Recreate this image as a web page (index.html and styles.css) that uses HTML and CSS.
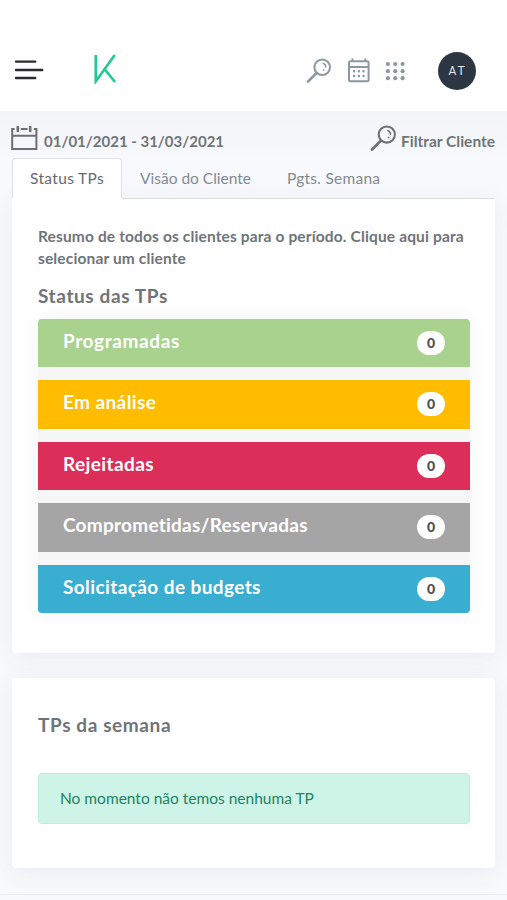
FILE: index.html
```html
<!DOCTYPE html>
<html lang="pt-BR">
<head>
    <meta charset="UTF-8">
    <meta name="viewport" content="width=device-width, initial-scale=1.0">
    <title>Status TPs</title>
    <link rel="stylesheet" href="styles.css">
</head>
<body>

    <!-- TOPO -->
    <header class="topbar">
        <svg class="menu" width="30" height="22" viewBox="0 0 30 22">
            <path d="M2 1.6H21.2M2 10H28.2M2 18H21.2"/>
        </svg>
        <svg class="logo" width="24" height="30" viewBox="0 0 24 30">
            <path d="M2.8 1V27.2L21.8 1M11.5 15L22 28"/>
        </svg>
        <nav class="icons">
            <svg class="icon" width="26" height="26" viewBox="0 0 26 26">
                <circle cx="16.2" cy="9.2" r="7.8"/>
                <path class="grosso" d="M10.5 15L2 23.6"/>
                <path class="fino" d="M16.7 5.2A4 4 0 0 1 19.7 9.6M18.4 11.6L17.2 12.5"/>
            </svg>
            <svg class="icon calendario" width="24" height="26" viewBox="0 0 24 26">
                <rect x="2" y="3.2" width="19.6" height="20" rx="1.5"/>
                <path d="M2 9H21.6M5.5 0.5V3.5M18.3 0.5V3.5"/>
                <path class="pontos" d="M7 13.3H7.1M11.8 13.3H11.9M16.5 13.3H16.6M7 18H7.1M11.8 18H11.9M16.5 18H16.6"/>
            </svg>
            <svg class="icon grade" width="20" height="20" viewBox="0 0 20 20">
                <circle cx="2.9" cy="3" r="2.1"/><circle cx="10.2" cy="3" r="2.1"/><circle cx="17.6" cy="3" r="2.1"/>
                <circle cx="2.9" cy="10.2" r="2.1"/><circle cx="10.2" cy="10.2" r="2.1"/><circle cx="17.6" cy="10.2" r="2.1"/>
                <circle cx="2.9" cy="17.2" r="2.1"/><circle cx="10.2" cy="17.2" r="2.1"/><circle cx="17.6" cy="17.2" r="2.1"/>
            </svg>
        </nav>
        <div class="avatar">AT</div>
    </header>
    <!-- FIM TOPO -->

    <main class="pagina">
        <!-- FILTROS -->
        <div class="filtros">
            <div class="filtro">
                <svg class="icon escuro" width="28" height="26" viewBox="0 0 28 26">
                    <path d="M4.6 4H2.2V24H26.4V4H23.8M2.2 10.8H26.4M10.8 4H17.6"/>
                    <path class="grosso" d="M7.8 2V6M20.2 2V6"/>
                </svg>
                <span class="periodo">01/01/2021 - 31/03/2021</span>
            </div>
            <div class="filtro">
                <svg class="icon escuro" width="27" height="27" viewBox="0 0 26 26">
                    <circle cx="16.2" cy="9.2" r="7.8"/>
                    <path class="grosso" d="M10.5 15L2 23.6"/>
                    <path class="fino" d="M16.7 5.2A4 4 0 0 1 19.7 9.6M18.4 11.6L17.2 12.5"/>
                </svg>
                <span class="cliente">Filtrar Cliente</span>
            </div>
        </div>

        <!-- ABAS -->
        <div class="abas">
            <a class="aba ativa">Status TPs</a>
            <a class="aba">Visão do Cliente</a>
            <a class="aba pgts">Pgts. Semana</a>
        </div>

        <section class="card resumo">
            <p class="texto">Resumo de todos os clientes para o período. Clique aqui para<br>selecionar um cliente</p>
            <h2 class="titulo">Status das TPs</h2>
            <ul class="lista">
                <li class="item verde"><span>Programadas</span><b class="badge">0</b></li>
                <li class="item amarelo"><span>Em análise</span><b class="badge">0</b></li>
                <li class="item vermelho"><span>Rejeitadas</span><b class="badge">0</b></li>
                <li class="item cinza"><span>Comprometidas/Reservadas</span><b class="badge">0</b></li>
                <li class="item azul"><span>Solicitação de budgets</span><b class="badge">0</b></li>
            </ul>
        </section>

        <section class="card semana">
            <h2 class="titulo">TPs da semana</h2>
            <div class="alerta">No momento não temos nenhuma TP</div>
        </section>
    </main>

    <footer class="rodape"></footer>

</body>
</html>
```

FILE: styles.css
```css
*{
    box-sizing: border-box;
}

body{
    margin: 0;
    height: 900px;
    overflow: hidden;
    background-color: #f8f9fc;
    color: #6f7479;
    font-family: Lato, "Open Sans", sans-serif;
    font-size: 15.5px;
}

/* topo */
.topbar{
    display: flex;
    align-items: center;
    height: 111px;
    padding: 30px 31px 0 14px;
    background-color: #fefefe;
}

.menu{
    fill: none;
    stroke: #2b2b2e;
    stroke-width: 2.4;
    stroke-linecap: round;
}

.logo{
    margin: -3px 0 0 49px;
    fill: none;
    stroke: #22c993;
    stroke-width: 2.7;
}

.icons{
    display: flex;
    align-items: center;
    margin-left: auto;
}

.icon{
    fill: none;
    stroke: #8d989e;
    stroke-width: 2;
}

.grosso{
    stroke-width: 2.6;
    stroke-linecap: round;
}

.fino{
    stroke-width: 1.5;
}

.calendario{
    margin-left: 15px;
}

.pontos{
    stroke-width: 2.4;
    stroke-linecap: round;
}

.grade{
    margin-left: 14px;
    fill: #8d989e;
    stroke: none;
}

.avatar{
    width: 38px;
    height: 38px;
    margin-left: 33px;
    border-radius: 50%;
    background-color: #2d3743;
    color: #e4e8ec;
    font-family: Roboto, sans-serif;
    font-size: 12px;
    letter-spacing: 2px;
    line-height: 39px;
    text-align: center;
    text-indent: 1px;
}

/* conteudo */
.pagina{
    padding: 0 12px;
    background: linear-gradient(#f3f4f8, #f8f9fc 50px);
}

.filtros{
    display: flex;
    justify-content: space-between;
    height: 47px;
    padding-top: 14px;
    font-weight: bold;
}

.filtro{
    display: flex;
    align-items: flex-start;
    line-height: 32px;
    white-space: nowrap;
}

.filtro:first-child{
    margin-left: -2px;
}

.filtro .icon{
    margin-right: 6px;
}

.filtro:last-child .icon{
    margin-right: 4px;
}

.periodo{
    font-size: 15px;
}

.escuro{
    stroke: #6c7074;
}

.abas{
    display: flex;
    height: 41px;
    border-bottom: 1px solid #dee2e6;
}

.aba{
    height: 41px;
    padding: 0 17px;
    border: 1px solid transparent;
    color: #84898f;
    line-height: 38px;
    white-space: nowrap;
}

.ativa{
    width: 110px;
    border-color: #dee2e6;
    border-bottom-color: #fff;
    border-radius: 4px 4px 0 0;
    background-color: #fff;
    color: #666a6e;
    letter-spacing: 0.35px;
}

.pgts{
    letter-spacing: 0.25px;
}

.card{
    padding: 0 25px 0 26px;
    border-radius: 4px;
    background-color: #fff;
    box-shadow: 0 4px 24px rgba(60, 75, 110, 0.08);
}

.resumo{
    height: 454px;
    padding-top: 26px;
    border-radius: 0 0 4px 4px;
}

.texto{
    margin: 0;
    font-weight: bold;
    letter-spacing: 0.14px;
    line-height: 22px;
    white-space: nowrap;
}

.titulo{
    margin: 0;
    font-size: 19px;
    letter-spacing: 0.6px;
    line-height: 26px;
}

.resumo .titulo{
    margin: 14px 0 10px;
}

.lista{
    display: flex;
    flex-direction: column;
    gap: 13px;
    margin: 0;
    padding: 0;
    list-style: none;
    box-shadow: 0 0 24px rgba(0, 0, 0, 0.05);
    background-color: #f6f6f6;
    border-radius: 4px;
}

.item{
    display: flex;
    justify-content: space-between;
    height: 48.4px;
    padding: 0 25px;
    color: #fff;
    font-size: 19px;
    font-weight: bold;
    letter-spacing: 0.4px;
    line-height: 44px;
}

.item:first-child{
    border-radius: 4px 4px 0 0;
    letter-spacing: 0.6px;
}

.item:last-child{
    border-radius: 0 0 4px 4px;
}

.verde{ background-color: #a8d28d; }
.amarelo{ background-color: #ffbc00; }
.vermelho{ background-color: #db2f59; }
.cinza{ background-color: #a5a5a5; letter-spacing: 0.25px; }
.azul{ background-color: #39aed1; }

.badge{
    width: 28px;
    height: 24px;
    margin-top: 12px;
    border-radius: 12px;
    background-color: #fff;
    color: #4b5056;
    font-size: 14px;
    letter-spacing: 0;
    line-height: 24px;
    text-align: center;
}

.semana{
    height: 190px;
    margin-top: 25px;
    padding-top: 34px;
}

.alerta{
    height: 51px;
    margin-top: 35px;
    padding-left: 21px;
    border: 1px solid #bdeedd;
    border-radius: 4px;
    background-color: #cef4e8;
    color: #238260;
    line-height: 48px;
}

.rodape{
    margin-top: 26px;
    height: 10px;
    border-top: 1px solid #e6e9ed;
}
```
